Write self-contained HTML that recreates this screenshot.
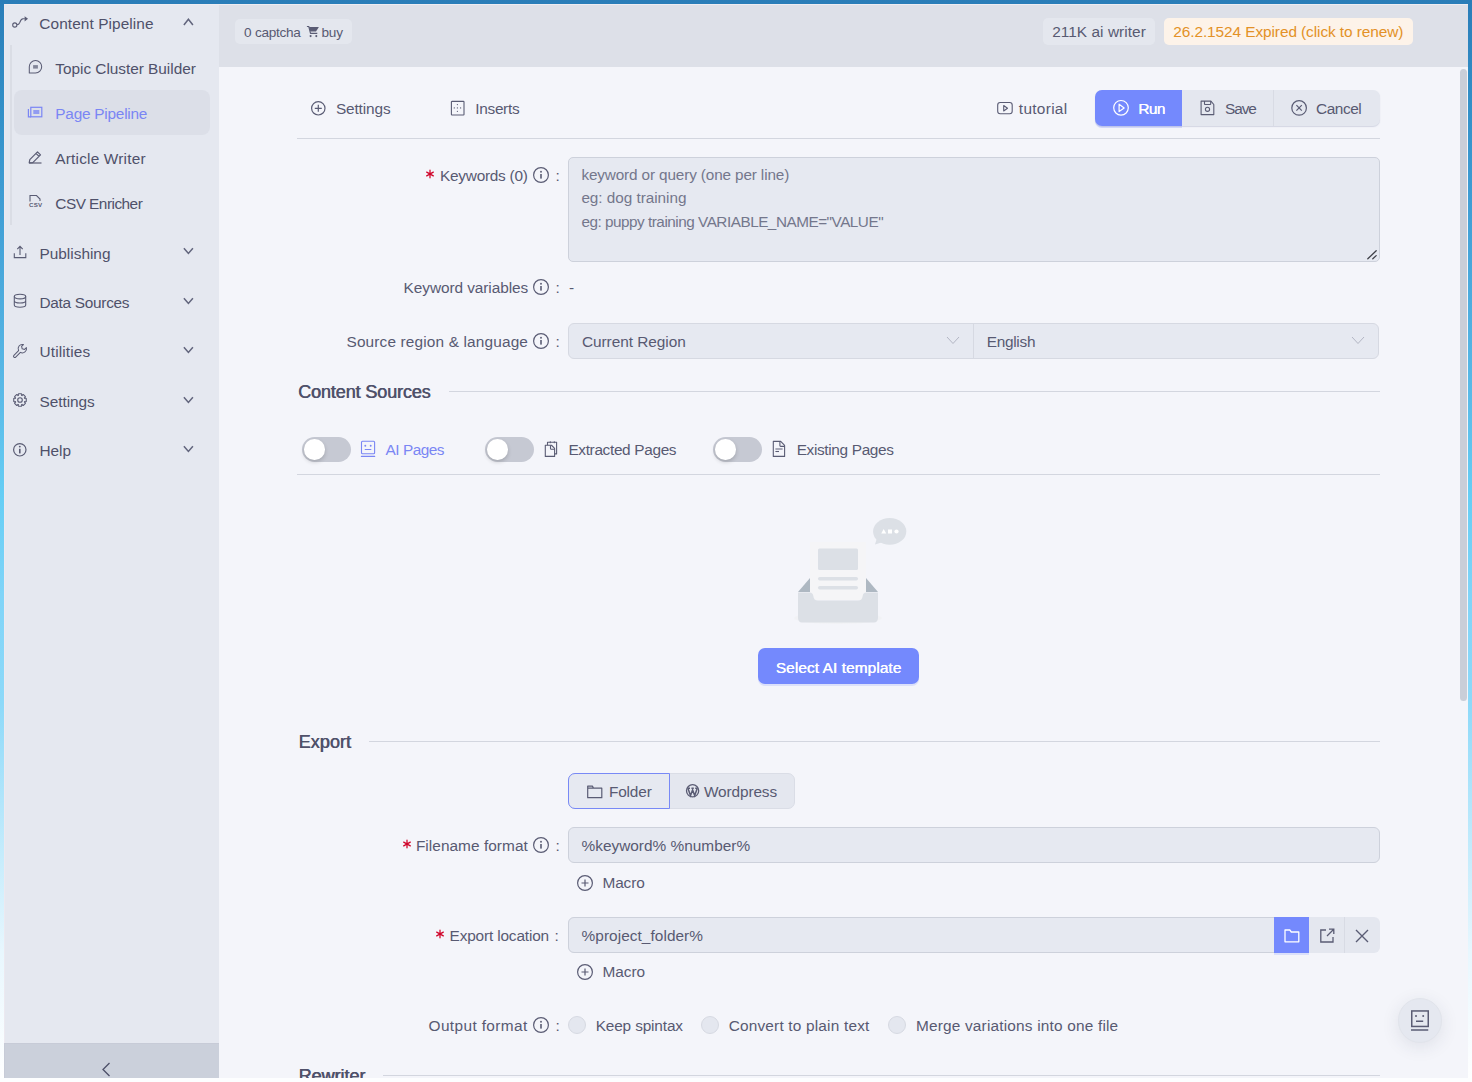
<!DOCTYPE html>
<html><head><meta charset="utf-8">
<style>
*{box-sizing:border-box;margin:0;padding:0}
html,body{width:1472px;height:1082px;overflow:hidden}
body{font-family:"Liberation Sans",sans-serif;position:relative;background:linear-gradient(180deg,#2a7db8 0%,#3390c8 10%,#3f9dd4 18.5%,#5bbbe8 37%,#66cef5 46%,#80d4f8 55%,#8dd9f9 65%,#c5ecfc 79%,#e8f7fe 88%,#ffffff 100%)}
.t{position:absolute;white-space:nowrap}
.r{position:absolute}
svg{position:absolute;overflow:visible}
#bot{position:absolute;left:0;top:1078px;width:1472px;height:4px;background:#fdfeff}
</style></head><body>
<div class="r" style="left:4px;top:4px;width:1464px;height:1074px;background:#f4f5fa;"></div>
<div class="r" style="left:4px;top:4px;width:215px;height:1074px;background:#e5e8f0;"></div>
<div class="r" style="left:4px;top:1043px;width:215px;height:35px;background:#cbd0db;"></div>
<div class="r" style="left:219px;top:4px;width:1249px;height:63px;background:#dde0e8;"></div>
<div class="r" style="left:4px;top:4px;width:1464px;height:1px;background:#eeecf1;"></div>
<div class="r" style="left:4px;top:4px;width:1px;height:1039px;background:#ece9f0;"></div>
<div class="r" style="left:4px;top:1043px;width:215px;height:1px;background:#c7cbd7;"></div>
<div class="r" style="left:4px;top:1043px;width:1px;height:35px;background:#c7cbd7;"></div>
<svg style="left:10px;top:12px;" width="22" height="20" viewBox="0 0 22 20"><circle cx="4.8" cy="13" r="2.1" fill="none" stroke="#5a5c74" stroke-width="1.1"/><path d="M6.9 12.7 C8.5 12.7 9.2 12 9.8 10.5 C10.5 8.5 11 7 13 6.8 L14.8 6.8" fill="none" stroke="#5a5c74" stroke-width="1.1"/><path d="M14.6 4.3 L18 6.8 L14.6 9.5Z" fill="#5a5c74"/></svg>
<div class="t" style="left:39.30px;top:16px;font-size:15.4px;line-height:15.4px;color:#4f516a;letter-spacing:0.087px;">Content Pipeline</div>
<svg style="left:182px;top:17px;" width="13" height="10" viewBox="0 0 13 10"><path d="M1.9 7.9 L6.4 2.3 L10.9 7.9" fill="none" stroke="#62657d" stroke-width="1.55"/></svg>
<div class="r" style="left:10px;top:45px;width:2px;height:180px;background:#dadde5;"></div>
<div class="r" style="left:14px;top:90px;width:196px;height:45px;background:#dcdfe8;border-radius:8px;"></div>
<svg style="left:24px;top:56px;" width="24" height="24" viewBox="0 0 24 24"><path d="M5.3 17 V10.7 A6.2 6.2 0 1 1 11.5 16.9 Z" fill="none" stroke="#5a5c74" stroke-width="1.05" stroke-linejoin="round"/><rect x="9.1" y="9.1" width="4.8" height="3.5" fill="#5a5c74" opacity="0.7"/></svg>
<div class="t" style="left:55.30px;top:61px;font-size:15.4px;line-height:15.4px;color:#4f516a;letter-spacing:-0.030px;">Topic Cluster Builder</div>
<svg style="left:27px;top:105px;" width="18" height="14" viewBox="0 0 18 14"><rect x="3.8" y="2.3" width="11" height="9.5" fill="none" stroke="#7a86f4" stroke-width="1.2"/><path d="M1.4 4 V11.8 H4" fill="none" stroke="#7a86f4" stroke-width="1.2"/><rect x="6.3" y="5" width="6" height="4" fill="#7a86f4" opacity="0.75"/></svg>
<div class="t" style="left:55.30px;top:106px;font-size:15.4px;line-height:15.4px;color:#7a86f4;letter-spacing:-0.242px;">Page Pipeline</div>
<svg style="left:27px;top:150px;" width="18" height="16" viewBox="0 0 18 16"><path d="M2.2 12.8 L2.8 9.6 L10.5 1.9 L13.5 4.9 L5.8 12.6 Z M9 3.4 L12 6.4" fill="none" stroke="#5a5c74" stroke-width="1.2" stroke-linejoin="round"/><path d="M2.2 13 H14.5" stroke="#5a5c74" stroke-width="1.2"/></svg>
<div class="t" style="left:55.30px;top:151px;font-size:15.4px;line-height:15.4px;color:#4f516a;letter-spacing:0.190px;">Article Writer</div>
<svg style="left:27px;top:194px;" width="18" height="18" viewBox="0 0 18 18"><path d="M3 7.5 V1.5 H9.5 L13 5 V7" fill="none" stroke="#5a5c74" stroke-width="1.1"/><text x="2" y="13.3" font-family="Liberation Sans" font-weight="bold" font-size="6.2" fill="#5a5c74" letter-spacing="0.25">CSV</text></svg>
<div class="t" style="left:55.30px;top:196px;font-size:15.4px;line-height:15.4px;color:#4f516a;letter-spacing:-0.524px;">CSV Enricher</div>
<svg style="left:12px;top:244px;" width="16" height="16" viewBox="0 0 16 16"><path d="M2.3 9.3 V13.6 H13.8 V9.3" fill="none" stroke="#5a5c74" stroke-width="1.1"/><path d="M8 11 V2.6 M5.3 5.2 L8 2.4 L10.7 5.2" fill="none" stroke="#5a5c74" stroke-width="1.1"/></svg>
<div class="t" style="left:39.50px;top:246px;font-size:15.4px;line-height:15.4px;color:#4f516a;letter-spacing:-0.006px;">Publishing</div>
<svg style="left:12px;top:293px;" width="16" height="16" viewBox="0 0 16 16"><ellipse cx="8" cy="3.6" rx="5.7" ry="2.3" fill="none" stroke="#5a5c74" stroke-width="1.1"/><path d="M2.3 3.6 V12 C2.3 15 13.7 15 13.7 12 V3.6 M2.3 7.8 C2.3 10.8 13.7 10.8 13.7 7.8" fill="none" stroke="#5a5c74" stroke-width="1.1"/></svg>
<div class="t" style="left:39.50px;top:295px;font-size:15.4px;line-height:15.4px;color:#4f516a;letter-spacing:-0.292px;">Data Sources</div>
<svg style="left:12px;top:343px;" width="16" height="16" viewBox="0 0 16 16"><path d="M1.9 12.3 L6.6 7.6 A4.2 4.2 0 0 1 11.4 1.6 L9.6 3.4 L10.2 5.8 L12.6 6.4 L14.4 4.6 A4.2 4.2 0 0 1 8.4 9.4 L3.7 14.1 A1.27 1.27 0 0 1 1.9 12.3 Z" fill="none" stroke="#5a5c74" stroke-width="1.05" stroke-linejoin="round"/></svg>
<div class="t" style="left:39.50px;top:344px;font-size:15.4px;line-height:15.4px;color:#4f516a;letter-spacing:0.130px;">Utilities</div>
<svg style="left:12px;top:392px;" width="16" height="16" viewBox="0 0 16 16"><path d="M14.25 6.60 L14.25 9.40 L12.41 10.13 L12.63 9.61 L13.40 11.43 L11.43 13.40 L9.61 12.63 L10.13 12.41 L9.40 14.25 L6.60 14.25 L5.87 12.41 L6.39 12.63 L4.57 13.40 L2.60 11.43 L3.37 9.61 L3.59 10.13 L1.75 9.40 L1.75 6.60 L3.59 5.87 L3.37 6.39 L2.60 4.57 L4.57 2.60 L6.39 3.37 L5.87 3.59 L6.60 1.75 L9.40 1.75 L10.13 3.59 L9.61 3.37 L11.43 2.60 L13.40 4.57 L12.63 6.39 L12.41 5.87Z" fill="none" stroke="#5a5c74" stroke-width="1.1" stroke-linejoin="round"/><circle cx="8" cy="8" r="2.3" fill="none" stroke="#5a5c74" stroke-width="1.1"/></svg>
<div class="t" style="left:39.50px;top:394px;font-size:15.4px;line-height:15.4px;color:#4f516a;letter-spacing:-0.056px;">Settings</div>
<svg style="left:12.2px;top:442.2px;" width="15.6" height="15.6" viewBox="0 0 15.6 15.6"><circle cx="7.8" cy="7.8" r="6.2" fill="none" stroke="#5a5c74" stroke-width="1.2"/><rect x="7.0" y="6.8" width="1.6" height="4.6" fill="#5a5c74"/><circle cx="7.8" cy="4.6" r="0.95" fill="#5a5c74"/></svg>
<div class="t" style="left:39.50px;top:443px;font-size:15.4px;line-height:15.4px;color:#4f516a;letter-spacing:-0.043px;">Help</div>
<svg style="left:182px;top:246px;" width="13" height="10" viewBox="0 0 13 10"><path d="M1.9 2.3 L6.4 7.4 L10.9 2.3" fill="none" stroke="#62657d" stroke-width="1.55"/></svg>
<svg style="left:182px;top:296px;" width="13" height="10" viewBox="0 0 13 10"><path d="M1.9 2.3 L6.4 7.4 L10.9 2.3" fill="none" stroke="#62657d" stroke-width="1.55"/></svg>
<svg style="left:182px;top:345px;" width="13" height="10" viewBox="0 0 13 10"><path d="M1.9 2.3 L6.4 7.4 L10.9 2.3" fill="none" stroke="#62657d" stroke-width="1.55"/></svg>
<svg style="left:182px;top:395px;" width="13" height="10" viewBox="0 0 13 10"><path d="M1.9 2.3 L6.4 7.4 L10.9 2.3" fill="none" stroke="#62657d" stroke-width="1.55"/></svg>
<svg style="left:182px;top:444px;" width="13" height="10" viewBox="0 0 13 10"><path d="M1.9 2.3 L6.4 7.4 L10.9 2.3" fill="none" stroke="#62657d" stroke-width="1.55"/></svg>
<svg style="left:100px;top:1062px;" width="12" height="16" viewBox="0 0 12 16"><path d="M9.5 1 L3 7.5 L9.5 14" fill="none" stroke="#4d4f68" stroke-width="1.3"/></svg>
<div class="r" style="left:235px;top:18.5px;width:117px;height:25.5px;background:#e4e7ee;border-radius:5px;"></div>
<div class="t" style="left:244.10px;top:26px;font-size:13.6px;line-height:13.6px;color:#585a72;letter-spacing:-0.264px;">0 captcha</div>
<svg style="left:302px;top:22px;" width="24" height="20" viewBox="0 0 24 20"><path d="M4.9 4.5 H6.8 L8.5 11.3 H15.3" fill="none" stroke="#5a5c74" stroke-width="1.15" stroke-linejoin="round"/><path d="M7 4.9 H16.9 L14 9.5 H8.3Z" fill="#5a5c74"/><circle cx="8.6" cy="14.1" r="1.05" fill="#5a5c74"/><circle cx="14.3" cy="14.1" r="1.05" fill="#5a5c74"/></svg>
<div class="t" style="left:321.40px;top:26px;font-size:13.6px;line-height:13.6px;color:#585a72;letter-spacing:-0.109px;">buy</div>
<div class="r" style="left:1043px;top:18px;width:112px;height:26.5px;background:#e4e7ee;border-radius:5px;"></div>
<div class="t" style="left:1052.20px;top:24px;font-size:15.4px;line-height:15.4px;color:#585a72;letter-spacing:0.049px;">211K ai writer</div>
<div class="r" style="left:1164px;top:18px;width:249px;height:27px;background:#fdf3e9;border-radius:5px;"></div>
<div class="t" style="left:1173.25px;top:24px;font-size:15.4px;line-height:15.4px;color:#e39126;letter-spacing:-0.077px;">26.2.1524 Expired (click to renew)</div>
<svg style="left:310.2px;top:99.7px;" width="16.6" height="16.6" viewBox="0 0 16.6 16.6"><circle cx="8.3" cy="8.3" r="6.7" fill="none" stroke="#5a5c74" stroke-width="1.2"/><path d="M8.3 4.800000000000001 V11.8 M4.800000000000001 8.3 H11.8" stroke="#5a5c74" stroke-width="1.2"/></svg>
<div class="t" style="left:335.90px;top:101px;font-size:15.4px;line-height:15.4px;color:#585a72;letter-spacing:-0.131px;">Settings</div>
<svg style="left:449px;top:100px;" width="17" height="17" viewBox="0 0 17 17"><rect x="2.4" y="1.4" width="12.6" height="13.6" rx="0.6" fill="none" stroke="#5a5c74" stroke-width="1.1"/><circle cx="8.4" cy="4.6" r="0.65" fill="#5a5c74"/><circle cx="8.4" cy="7.9" r="0.65" fill="#5a5c74"/><circle cx="8.4" cy="11.3" r="0.65" fill="#5a5c74"/><circle cx="5.3" cy="7.9" r="0.65" fill="#5a5c74"/><circle cx="11.6" cy="7.9" r="0.65" fill="#5a5c74"/></svg>
<div class="t" style="left:475.30px;top:101px;font-size:15.4px;line-height:15.4px;color:#585a72;letter-spacing:-0.317px;">Inserts</div>
<div class="r" style="left:297px;top:138px;width:1083px;height:1px;background:#d3d6df;"></div>
<svg style="left:995px;top:100px;" width="19" height="17" viewBox="0 0 19 17"><rect x="2.7" y="2.5" width="14.5" height="11.2" rx="2.5" fill="none" stroke="#5a5c74" stroke-width="1.1"/><path d="M8.7 5.5 L12.5 8.2 L8.7 11Z" fill="none" stroke="#5a5c74" stroke-width="1.1" stroke-linejoin="round"/></svg>
<div class="t" style="left:1018.80px;top:101px;font-size:15.4px;line-height:15.4px;color:#585a72;letter-spacing:0.309px;">tutorial</div>
<div class="r" style="left:1095px;top:90px;width:285px;height:36px;background:#e4e7ef;border-radius:7px;box-shadow:0 1px 1px rgba(180,186,205,0.5);"></div>
<div class="r" style="left:1095px;top:90px;width:87px;height:36px;background:#7489fd;border-radius:7px 0 0 7px;box-shadow:0 2px 0 rgba(120,140,250,0.25);"></div>
<div class="r" style="left:1273px;top:90px;width:1px;height:36px;background:#d8dbe4;"></div>
<svg style="left:1111px;top:98px;" width="20" height="20" viewBox="0 0 20 20"><circle cx="10" cy="9.8" r="7.3" fill="none" stroke="#fff" stroke-width="1.2"/><path d="M8.1 6.2 L13.2 9.9 L8.1 13.6Z" fill="none" stroke="#fff" stroke-width="1.2" stroke-linejoin="round"/></svg>
<div class="t" style="left:1138.20px;top:101px;font-size:15.4px;line-height:15.4px;color:#ffffff;letter-spacing:-0.617px;text-shadow:0.3px 0 0 #fff;">Run</div>
<svg style="left:1199px;top:99px;" width="17" height="17" viewBox="0 0 17 17"><path d="M2.1 2.1 H11.9 L14.8 5.5 V15.6 H2.1Z" fill="none" stroke="#5a5c74" stroke-width="1.1" stroke-linejoin="round"/><path d="M5.5 2.1 V5 Q5.5 5.5 6 5.5 H11.2 Q11.7 5.5 11.7 5 V2.1" fill="none" stroke="#5a5c74" stroke-width="1.1"/><circle cx="8.5" cy="10.3" r="2.1" fill="none" stroke="#5a5c74" stroke-width="1.1"/></svg>
<div class="t" style="left:1224.90px;top:101px;font-size:15.4px;line-height:15.4px;color:#585a72;letter-spacing:-1.025px;">Save</div>
<svg style="left:1289px;top:98px;" width="20" height="20" viewBox="0 0 20 20"><circle cx="10.1" cy="9.9" r="7.3" fill="none" stroke="#5a5c74" stroke-width="1.2"/><path d="M7.4 7.2 L12.8 12.6 M12.8 7.2 L7.4 12.6" stroke="#5a5c74" stroke-width="1.2"/></svg>
<div class="t" style="left:1316.00px;top:101px;font-size:15.4px;line-height:15.4px;color:#585a72;letter-spacing:-0.440px;">Cancel</div>
<svg style="left:425px;top:169.2px;" width="10" height="10" viewBox="0 0 10 10"><path d="M5 1.2 V8.8 M1.7 3.1 L8.3 6.9 M8.3 3.1 L1.7 6.9" stroke="#d0052a" stroke-width="1.25" stroke-linecap="round"/></svg>
<div class="t" style="left:440.00px;top:168px;font-size:15.4px;line-height:15.4px;color:#585a72;letter-spacing:-0.251px;">Keywords (0)</div>
<svg style="left:532px;top:166px;" width="18" height="18" viewBox="0 0 18 18"><circle cx="9" cy="9" r="7.4" fill="none" stroke="#5a5c74" stroke-width="1.2"/><rect x="8.2" y="8" width="1.6" height="4.6" fill="#5a5c74"/><circle cx="9" cy="5.8" r="0.95" fill="#5a5c74"/></svg>
<div class="t" style="left:555.60px;top:168px;font-size:15.4px;line-height:15.4px;color:#585a72;">:</div>
<div class="r" style="left:568px;top:157px;width:812px;height:105px;background:#e6e9f1;border:1px solid #cdd1db;border-radius:5px;"></div>
<div class="t" style="left:581.40px;top:167px;font-size:15.3px;line-height:15.3px;color:#74778c;letter-spacing:-0.128px;">keyword or query (one per line)</div>
<div class="t" style="left:581.40px;top:190px;font-size:15.3px;line-height:15.3px;color:#74778c;letter-spacing:-0.030px;">eg: dog training</div>
<div class="t" style="left:581.40px;top:214px;font-size:15.3px;line-height:15.3px;color:#74778c;letter-spacing:-0.484px;">eg: puppy training VARIABLE_NAME="VALUE"</div>
<svg style="left:1366px;top:249px;" width="12" height="11" viewBox="0 0 12 11"><path d="M1.8 9.8 L10.2 1.8 M6.8 9.8 L10.2 6.6" stroke="#3f4048" stroke-width="1.3" stroke-linecap="round"/></svg>
<div class="t" style="left:403.60px;top:280px;font-size:15.4px;line-height:15.4px;color:#585a72;letter-spacing:-0.072px;">Keyword variables</div>
<svg style="left:532px;top:278px;" width="18" height="18" viewBox="0 0 18 18"><circle cx="9" cy="9" r="7.4" fill="none" stroke="#5a5c74" stroke-width="1.2"/><rect x="8.2" y="8" width="1.6" height="4.6" fill="#5a5c74"/><circle cx="9" cy="5.8" r="0.95" fill="#5a5c74"/></svg>
<div class="t" style="left:555.60px;top:280px;font-size:15.4px;line-height:15.4px;color:#585a72;">:</div>
<div class="t" style="left:569.00px;top:280px;font-size:15.4px;line-height:15.4px;color:#585a72;">-</div>
<div class="t" style="left:346.50px;top:334px;font-size:15.4px;line-height:15.4px;color:#585a72;letter-spacing:0.150px;">Source region &amp; language</div>
<svg style="left:532px;top:332px;" width="18" height="18" viewBox="0 0 18 18"><circle cx="9" cy="9" r="7.4" fill="none" stroke="#5a5c74" stroke-width="1.2"/><rect x="8.2" y="8" width="1.6" height="4.6" fill="#5a5c74"/><circle cx="9" cy="5.8" r="0.95" fill="#5a5c74"/></svg>
<div class="t" style="left:555.60px;top:334px;font-size:15.4px;line-height:15.4px;color:#585a72;">:</div>
<div class="r" style="left:568px;top:323px;width:811px;height:36px;background:#e6e9f1;border:1px solid #d6d9e2;border-radius:6px;"></div>
<div class="r" style="left:973px;top:324px;width:1px;height:34px;background:#d6d9e2;"></div>
<div class="t" style="left:581.90px;top:334px;font-size:15.4px;line-height:15.4px;color:#585a72;letter-spacing:-0.038px;">Current Region</div>
<div class="t" style="left:986.70px;top:334px;font-size:15.4px;line-height:15.4px;color:#585a72;letter-spacing:-0.287px;">English</div>
<svg style="left:946px;top:335px;" width="14" height="12" viewBox="0 0 14 12"><path d="M1 2 L7 8.5 L13 2" fill="none" stroke="#b3b6c4" stroke-width="1"/></svg>
<svg style="left:1351px;top:335px;" width="14" height="12" viewBox="0 0 14 12"><path d="M1 2 L7 8.5 L13 2" fill="none" stroke="#b3b6c4" stroke-width="1"/></svg>
<div class="t" style="left:297.90px;top:383px;font-size:18px;line-height:18px;color:#4f516a;letter-spacing:-0.105px;text-shadow:0.6px 0 0 #4f516a;">Content Sources</div>
<div class="r" style="left:449px;top:391px;width:931px;height:1px;background:#d3d6df;"></div>
<div class="r" style="left:302px;top:437px;width:49px;height:25px;background:#c6c9d3;border-radius:12.5px;"></div>
<div class="r" style="left:304px;top:439.2px;width:20.5px;height:20.5px;background:#ffffff;border-radius:10.25px;box-shadow:0 2px 4px rgba(0,0,0,0.18);"></div>
<svg style="left:359px;top:439px;" width="18" height="20" viewBox="0 0 18 20"><rect x="2.5" y="2.2" width="13.1" height="12.5" rx="1" fill="none" stroke="#7a86f4" stroke-width="1.1"/><circle cx="6.3" cy="6.7" r="0.95" fill="#7a86f4"/><circle cx="11.7" cy="6.7" r="0.95" fill="#7a86f4"/><path d="M6.2 10.5 H11.9 M2.4 17.4 H15.7" stroke="#7a86f4" stroke-width="1.1" stroke-linecap="round"/></svg>
<div class="t" style="left:385.60px;top:442px;font-size:15.4px;line-height:15.4px;color:#7a86f4;letter-spacing:-0.500px;">AI Pages</div>
<div class="r" style="left:485px;top:437px;width:49px;height:25px;background:#c6c9d3;border-radius:12.5px;"></div>
<div class="r" style="left:487px;top:439.2px;width:20.5px;height:20.5px;background:#ffffff;border-radius:10.25px;box-shadow:0 2px 4px rgba(0,0,0,0.18);"></div>
<svg style="left:538px;top:436px;" width="24" height="26" viewBox="0 0 24 26"><path d="M7.3 9.25 H13.5 L16.6 12.3 V20.4 H7.3Z" fill="none" stroke="#5a5c74" stroke-width="1.1" stroke-linejoin="round"/><path d="M12.5 9.25 V12.5 Q12.5 13.3 13.3 13.3 H16.6" fill="none" stroke="#5a5c74" stroke-width="1.1"/><path d="M9.5 9.25 V6.25 H18.6 V17.9 H16.6" fill="none" stroke="#5a5c74" stroke-width="1.1" stroke-linejoin="round"/><path d="M12.3 5.3 V7.2 M16.3 5.3 V7.2" stroke="#5a5c74" stroke-width="1"/></svg>
<div class="t" style="left:568.40px;top:442px;font-size:15.4px;line-height:15.4px;color:#585a72;letter-spacing:-0.340px;">Extracted Pages</div>
<div class="r" style="left:713px;top:437px;width:49px;height:25px;background:#c6c9d3;border-radius:12.5px;"></div>
<div class="r" style="left:715px;top:439.2px;width:20.5px;height:20.5px;background:#ffffff;border-radius:10.25px;box-shadow:0 2px 4px rgba(0,0,0,0.18);"></div>
<svg style="left:766px;top:436px;" width="24" height="26" viewBox="0 0 24 26"><path d="M7.3 5.4 H14.7 L18.6 9.4 V20.4 H7.3Z" fill="none" stroke="#5a5c74" stroke-width="1.1" stroke-linejoin="round"/><path d="M13.9 5.4 V9.6 Q13.9 10.4 14.7 10.4 H18.6" fill="none" stroke="#5a5c74" stroke-width="1.1"/><path d="M9.4 13 H16.6" stroke="#5a5c74" stroke-width="1.4" opacity="0.7"/><path d="M9.4 15.5 H13" stroke="#5a5c74" stroke-width="1.1"/></svg>
<div class="t" style="left:796.70px;top:442px;font-size:15.4px;line-height:15.4px;color:#585a72;letter-spacing:-0.348px;">Existing Pages</div>
<div class="r" style="left:297px;top:474px;width:1083px;height:1px;background:#d3d6df;"></div>
<svg style="left:790px;top:512px;" width="124" height="116" viewBox="0 0 124 116">
<ellipse cx="48" cy="106" rx="44" ry="6" fill="#f0f1f4" opacity="0.8"/>
<path d="M8 80 L20 66 H76 L88 80Z" fill="#aeb8c2"/>
<rect x="20" y="30" width="56" height="58" fill="#f5f5f7"/>
<rect x="28" y="36.5" width="40" height="21.5" rx="1.5" fill="#dce0e6"/>
<rect x="28" y="65" width="40" height="3.4" rx="1.7" fill="#dce0e6"/>
<rect x="28" y="74" width="40" height="3.4" rx="1.7" fill="#dce0e6"/>
<path d="M8 80.5 H19.5 C22 80.5 23 82 23.3 84 C23.8 87 25 88.5 28 88.5 H68 C71 88.5 72.2 87 72.7 84 C73 82 74 80.5 76.5 80.5 H88 V106 C88 108.5 86.5 110.5 84 110.5 H12 C9.5 110.5 8 108.5 8 106Z" fill="#dce0e6"/>
<ellipse cx="99.7" cy="19.4" rx="16.6" ry="13.3" fill="#dce0e6"/>
<path d="M87 26 L85 32.5 L93 30Z" fill="#dce0e6"/>
<path d="M93.7 17 L96.2 21.5 H91.2Z" fill="#fff"/><rect x="98" y="17.5" width="4" height="4" fill="#fff"/><circle cx="106.5" cy="19.5" r="2.1" fill="#fff"/>
</svg>
<div class="r" style="left:758px;top:648px;width:161px;height:36px;background:#7489fd;border-radius:7px;box-shadow:0 2px 0 rgba(120,140,250,0.2);"></div>
<div class="t" style="left:775.70px;top:660px;font-size:15.4px;line-height:15.4px;color:#ffffff;letter-spacing:0.087px;text-shadow:0.3px 0 0 #fff;">Select AI template</div>
<div class="t" style="left:298.40px;top:733px;font-size:18px;line-height:18px;color:#4f516a;letter-spacing:0.079px;text-shadow:0.6px 0 0 #4f516a;">Export</div>
<div class="r" style="left:369px;top:741px;width:1011px;height:1px;background:#d3d6df;"></div>
<div class="r" style="left:568px;top:773px;width:227px;height:36px;background:#e4e7ef;border:1px solid #dadde6;border-radius:7px;"></div>
<div class="r" style="left:568px;top:773px;width:102px;height:36px;background:#e6e9f1;border:1px solid #7889f6;border-radius:7px 0 0 7px;"></div>
<svg style="left:585px;top:783px;" width="19" height="17" viewBox="0 0 19 17"><path d="M2.7 3.1 H7.4 L8.6 5.2 H16.8 V14.7 H2.7Z M2.7 5.2 H8.6" fill="none" stroke="#5a5c74" stroke-width="1.2" stroke-linejoin="round"/></svg>
<div class="t" style="left:608.90px;top:784px;font-size:15.4px;line-height:15.4px;color:#585a72;letter-spacing:-0.142px;">Folder</div>
<svg style="left:684px;top:782px;" width="18" height="18" viewBox="0 0 18 18"><circle cx="8.6" cy="8.8" r="6.1" fill="none" stroke="#5a5c74" stroke-width="1.3"/><path d="M3.9 6.3 L6.5 13.6 L8.6 8 L10.7 13.6 L13.3 6.3 M3.6 6.2 H6 M7.4 6.2 H9.8 M11.2 6.2 H13.6" fill="none" stroke="#5a5c74" stroke-width="1.5"/></svg>
<div class="t" style="left:704.00px;top:784px;font-size:15.4px;line-height:15.4px;color:#585a72;letter-spacing:-0.130px;">Wordpress</div>
<svg style="left:401.8px;top:839.2px;" width="10" height="10" viewBox="0 0 10 10"><path d="M5 1.2 V8.8 M1.7 3.1 L8.3 6.9 M8.3 3.1 L1.7 6.9" stroke="#d0052a" stroke-width="1.25" stroke-linecap="round"/></svg>
<div class="t" style="left:415.90px;top:838px;font-size:15.4px;line-height:15.4px;color:#585a72;letter-spacing:0.049px;">Filename format</div>
<svg style="left:532px;top:836px;" width="18" height="18" viewBox="0 0 18 18"><circle cx="9" cy="9" r="7.4" fill="none" stroke="#5a5c74" stroke-width="1.2"/><rect x="8.2" y="8" width="1.6" height="4.6" fill="#5a5c74"/><circle cx="9" cy="5.8" r="0.95" fill="#5a5c74"/></svg>
<div class="t" style="left:555.60px;top:838px;font-size:15.4px;line-height:15.4px;color:#585a72;">:</div>
<div class="r" style="left:568px;top:827px;width:812px;height:35.5px;background:#e6e9f1;border:1px solid #cdd1db;border-radius:6px;"></div>
<div class="t" style="left:581.50px;top:838px;font-size:15.4px;line-height:15.4px;color:#585a72;letter-spacing:0.005px;">%keyword% %number%</div>
<svg style="left:575.5px;top:873.5px;" width="18" height="18" viewBox="0 0 18 18"><circle cx="9" cy="9" r="7.4" fill="none" stroke="#5a5c74" stroke-width="1.2"/><path d="M9 5.5 V12.5 M5.5 9 H12.5" stroke="#5a5c74" stroke-width="1.2"/></svg>
<div class="t" style="left:602.40px;top:875px;font-size:15.4px;line-height:15.4px;color:#585a72;letter-spacing:-0.077px;">Macro</div>
<svg style="left:434.7px;top:929.2px;" width="10" height="10" viewBox="0 0 10 10"><path d="M5 1.2 V8.8 M1.7 3.1 L8.3 6.9 M8.3 3.1 L1.7 6.9" stroke="#d0052a" stroke-width="1.25" stroke-linecap="round"/></svg>
<div class="t" style="left:449.60px;top:928px;font-size:15.4px;line-height:15.4px;color:#585a72;letter-spacing:-0.165px;">Export location</div>
<div class="t" style="left:554.50px;top:928px;font-size:15.4px;line-height:15.4px;color:#585a72;">:</div>
<div class="r" style="left:568px;top:917px;width:812px;height:35.5px;background:#e4e7ef;border-radius:6px;"></div>
<div class="r" style="left:568px;top:917px;width:707px;height:35.5px;background:#e6e9f1;border:1px solid #cdd1db;border-radius:6px 0 0 6px;"></div>
<div class="r" style="left:1274px;top:917px;width:35px;height:36px;background:#7489fd;box-shadow:0 2px 0 rgba(120,140,250,0.2);"></div>
<div class="r" style="left:1344px;top:917px;width:1px;height:36px;background:#d8dbe4;"></div>
<div class="t" style="left:581.60px;top:928px;font-size:15.4px;line-height:15.4px;color:#585a72;letter-spacing:0.050px;">%project_folder%</div>
<svg style="left:1283px;top:927px;" width="18" height="17" viewBox="0 0 18 17"><path d="M2 3 H6.8 L8.3 5 H15.8 V14.8 H2Z" fill="none" stroke="#fff" stroke-width="1.3" stroke-linejoin="round"/></svg>
<svg style="left:1318px;top:927px;" width="18" height="18" viewBox="0 0 18 18"><path d="M8 3 H2.8 V15 H15 V10" fill="none" stroke="#5a5c74" stroke-width="1.3"/><path d="M9 9 L15.5 2.5 M11 2.2 H15.8 V7" fill="none" stroke="#5a5c74" stroke-width="1.3"/></svg>
<svg style="left:1354px;top:928px;" width="16" height="16" viewBox="0 0 16 16"><path d="M2 2 L14 14 M14 2 L2 14" stroke="#5a5c74" stroke-width="1.4"/></svg>
<svg style="left:575.5px;top:963px;" width="18" height="18" viewBox="0 0 18 18"><circle cx="9" cy="9" r="7.4" fill="none" stroke="#5a5c74" stroke-width="1.2"/><path d="M9 5.5 V12.5 M5.5 9 H12.5" stroke="#5a5c74" stroke-width="1.2"/></svg>
<div class="t" style="left:602.50px;top:964px;font-size:15.4px;line-height:15.4px;color:#585a72;letter-spacing:-0.057px;">Macro</div>
<div class="t" style="left:428.60px;top:1018px;font-size:15.4px;line-height:15.4px;color:#585a72;letter-spacing:0.373px;">Output format</div>
<svg style="left:532px;top:1016.4000000000001px;" width="18" height="18" viewBox="0 0 18 18"><circle cx="9" cy="9" r="7.4" fill="none" stroke="#5a5c74" stroke-width="1.2"/><rect x="8.2" y="8" width="1.6" height="4.6" fill="#5a5c74"/><circle cx="9" cy="5.8" r="0.95" fill="#5a5c74"/></svg>
<div class="t" style="left:555.60px;top:1018px;font-size:15.4px;line-height:15.4px;color:#585a72;">:</div>
<div class="r" style="left:568px;top:1016px;width:18px;height:18px;background:#e4e7ef;border:1px solid #d6d9e2;border-radius:9px;"></div>
<div class="t" style="left:595.70px;top:1018px;font-size:15.4px;line-height:15.4px;color:#585a72;letter-spacing:-0.153px;">Keep spintax</div>
<div class="r" style="left:701px;top:1016px;width:18px;height:18px;background:#e4e7ef;border:1px solid #d6d9e2;border-radius:9px;"></div>
<div class="t" style="left:728.70px;top:1018px;font-size:15.4px;line-height:15.4px;color:#585a72;letter-spacing:0.187px;">Convert to plain text</div>
<div class="r" style="left:888px;top:1016px;width:18px;height:18px;background:#e4e7ef;border:1px solid #d6d9e2;border-radius:9px;"></div>
<div class="t" style="left:915.90px;top:1018px;font-size:15.4px;line-height:15.4px;color:#585a72;letter-spacing:0.190px;">Merge variations into one file</div>
<div class="t" style="left:298.40px;top:1067px;font-size:18px;line-height:18px;color:#4f516a;letter-spacing:-0.039px;text-shadow:0.6px 0 0 #4f516a;">Rewriter</div>
<div class="r" style="left:383px;top:1075px;width:997px;height:1px;background:#d3d6df;"></div>
<div class="r" style="left:1460px;top:69px;width:7px;height:632px;background:#c9ced8;border-radius:4px;"></div>
<div class="r" style="left:1397.5px;top:998px;width:44.5px;height:44.5px;background:#e5e8f0;border-radius:50%;box-shadow:0 4px 18px rgba(40,50,80,0.10);border:1px solid #e1e4eb;"></div>
<svg style="left:1408px;top:1007px;" width="24" height="26" viewBox="0 0 24 26"><rect x="3.75" y="3.95" width="16.5" height="15.5" fill="none" stroke="#5a5c74" stroke-width="1.5"/><circle cx="8" cy="9" r="1" fill="#5a5c74"/><circle cx="15.2" cy="9" r="1" fill="#5a5c74"/><path d="M8 14.2 H15.2 M3 22.9 H20.25" stroke="#5a5c74" stroke-width="1.5"/></svg>
<div id="bot"></div>
</body></html>
